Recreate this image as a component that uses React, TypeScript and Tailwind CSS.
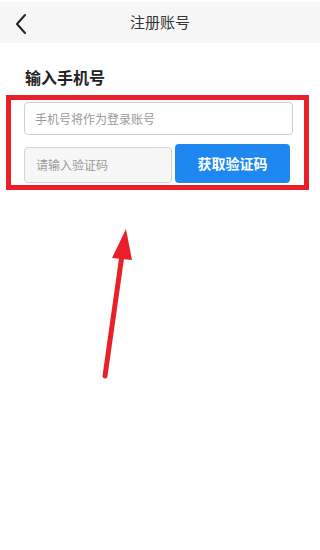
export default function App() {
  return (
    <div
      className="relative w-[320px] h-[550px] bg-white overflow-hidden"
      style={{ fontFamily: '"Noto Sans CJK SC", "Noto Sans", sans-serif' }}
    >
      <div className="pt-[2px]">
        <header className="relative h-[41px] bg-[#f7f7f7] flex items-center justify-center">
          <svg className="absolute left-[14px] top-[11px]" width="14" height="22" viewBox="0 0 14 22">
            <path d="M11 2 L3 11 L11 20" fill="none" stroke="#222" strokeWidth="2" strokeLinecap="round" strokeLinejoin="round" />
          </svg>
          <span className="text-[15px] text-[#333]">注册账号</span>
        </header>
      </div>

      <h1 className="mt-[22px] ml-[25px] text-[16px] leading-[24px] font-bold text-[#222]">输入手机号</h1>

      <div className="mt-[6px] ml-[6px] w-[303px] border-[5px] border-[#e8202a] pt-[2px] pl-[13px] pr-[11px] pb-[2px]">
        <div className="h-[33px] rounded-[4px] border border-[#cfcfcf] bg-white flex items-center pl-[10px] text-[12px] text-[#9a9a9a]">
          手机号将作为登录账号
        </div>
        <div className="mt-[9px] flex items-end">
          <div className="w-[148px] h-[36px] rounded-[4px] border border-[#d4d4d4] bg-[#f7f7f7] flex items-center pl-[11px] text-[12px] text-[#9a9a9a]">
            请输入验证码
          </div>
          <button className="ml-[3px] w-[115px] h-[39px] rounded-[4px] bg-[#1e88f0] text-white text-[14px] font-bold">
            获取验证码
          </button>
        </div>
      </div>

      <svg className="absolute left-0 top-0" width="320" height="550" viewBox="0 0 320 550">
        <line x1="105" y1="376" x2="122" y2="255" stroke="#e8202a" strokeWidth="5" strokeLinecap="round" />
        <polygon points="126,229 112,258 132,260" fill="#e8202a" />
      </svg>
    </div>
  );
}
